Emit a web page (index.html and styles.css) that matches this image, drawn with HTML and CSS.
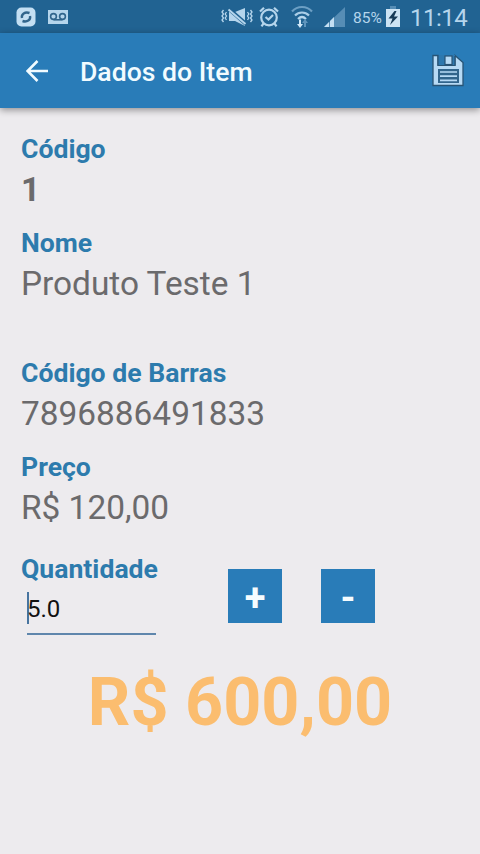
FILE: index.html
```
<!DOCTYPE html>
<html lang="pt-BR">
<head>
    <meta charset="UTF-8">
    <meta name="viewport" content="width=device-width, initial-scale=1.0">
    <title>Dados do Item</title>
    <link rel="stylesheet" href="styles.css">
</head>
<body>
    <div class="status-bar">
        <div class="status-left">
            <svg width="20" height="20" viewBox="0 0 20 20">
                <rect x="0.5" y="0.5" width="19" height="19" rx="5" fill="#c3dff3"/>
                <path d="M6 11C5 7 9 4.500 13.500 6M14 9C15 13 11 15.500 6.500 14" fill="none" stroke="#31658c" stroke-width="2.400"/>
            </svg>
            <svg width="20" height="14" viewBox="0 0 20 14">
                <rect width="20" height="14" fill="#b5d5ec"/>
                <g fill="none" stroke="#31658c" stroke-width="1.600">
                    <circle cx="5.500" cy="6.500" r="2.900"/>
                    <circle cx="14.500" cy="6.500" r="2.900"/>
                    <path d="M5.500 9.800h9"/>
                </g>
            </svg>
        </div>
        <div class="status-right">
            <svg class="icon-mute" width="32" height="20" viewBox="0 0 32 20">
                <g fill="none" stroke="#b5d5ec" stroke-width="1.300">
                    <path d="M2.500 3l-1.500 2 1.500 2-1.500 2 1.500 2-1.500 2 1.500 2M5.500 5l-1.300 2 1.300 2-1.300 2 1.300 2M26.500 5l1.300 2-1.300 2 1.300 2-1.300 2M29.500 3l1.500 2-1.500 2 1.500 2-1.500 2 1.500 2-1.500 2"/>
                </g>
                <path d="M8 5h6l10-4v18l-10-5H8z" fill="#b5d5ec"/>
                <path d="M8 2l17 15" stroke="#216392" stroke-width="4"/>
                <path d="M7.500 2.500l17 14.500" stroke="#b5d5ec" stroke-width="2"/>
            </svg>
            <svg class="icon-alarm" width="20" height="22" viewBox="0 0 20 22">
                <g fill="none" stroke="#b5d5ec" stroke-width="2.200">
                    <circle cx="10" cy="11.500" r="7.800"/>
                    <path d="M1 5.500l4-3.800M19 5.500l-4-3.800M4.500 17.500l-2 2.800M15.500 17.500l2 2.800M6.500 11l3 2.500 4.500-4.500"/>
                </g>
            </svg>
            <svg class="icon-wifi" width="22" height="24" viewBox="0 0 22 24">
                <g fill="none" stroke-width="2.200">
                    <path d="M1 6.500C6.500.5 15.500.5 21 6.500" stroke="#6c9fc4"/>
                    <path d="M4 10.500c4-4 10-4 14 0" stroke="#a9cde7"/>
                    <path d="M7 14c2.500-2.500 5.500-2.500 8 0" stroke="#b5d5ec"/>
                </g>
                <path d="M8 14.500h2v4.500h2l-3 4-3-4h2z" fill="#d0e8f8"/>
                <path d="M14 14l-3 4h2v4h2v-4h2z" fill="#5f95bd"/>
            </svg>
            <svg class="icon-signal" width="21" height="20" viewBox="0 0 21 20">
                <path d="M0 20L21 0v20z" fill="#568db5"/>
                <path d="M0 20l5-5v5zM6 14l4-4v10H6z" fill="#c3dff3"/>
            </svg>
            <span class="battery-text">85%</span>
            <svg class="icon-battery" width="14" height="21" viewBox="0 0 14 21">
                <path d="M4 0h6v3H4z" fill="#568db5"/>
                <path d="M0 3h14v18H0z" fill="#cce3f3"/>
                <path d="M8.500 5L2.500 12.500h4l-2.500 6.500 8-8.500H8L10.500 5z" fill="#173b57"/>
            </svg>
            <span class="clock">11:14</span>
        </div>
    </div>
    <header class="toolbar">
        <svg width="22" height="22" viewBox="0 0 22 22">
            <path d="M22 11H2M11.500 1L1.500 11l10 10" fill="none" stroke="#f1fbff" stroke-width="2.600"/>
        </svg>
        <h1>Dados do Item</h1>
        <svg class="icon-save" width="32" height="33" viewBox="0 0 32 33">
            <path d="M1 1.500h5V11h17V1.500L31 8.500v23H1z" fill="#b6daf5" stroke="#285475" stroke-width="1.300"/>
            <rect x="6" y="1" width="17" height="10" fill="#2d78ae"/>
            <path d="M6 1v10.500h17V2" fill="none" stroke="#285475" stroke-width="1.200"/>
            <rect x="13" y="2" width="7" height="8.500" fill="#b6daf5" stroke="#285475" stroke-width="1.200"/>
            <rect x="6" y="15" width="21" height="14" fill="#31658c"/>
            <path d="M8 18h17M8 22.200h17M8 26.300h17" stroke="#b6daf5" stroke-width="1.700"/>
        </svg>
    </header>
    <main class="container">
        <div class="field">
            <label>Código</label>
            <p class="value bold">1</p>
        </div>
        <div class="field field-name">
            <label>Nome</label>
            <p class="value">Produto Teste 1</p>
        </div>
        <div class="field">
            <label>Código de Barras</label>
            <p class="value">7896886491833</p>
        </div>
        <div class="field">
            <label>Preço</label>
            <p class="value">R$ 120,00</p>
        </div>
        <div class="quantity-row">
            <div class="quantity">
                <label>Quantidade</label>
                <div class="quantity-input"><span class="cursor"></span>5.0</div>
            </div>
            <button type="button">+</button>
            <button type="button">-</button>
        </div>
        <p class="total">R$ 600,00</p>
    </main>
</body>
</html>
```
FILE: styles.css
```
body {
    font-family: Roboto, 'Liberation Sans', sans-serif;
    margin: 0;
    height: 854px;
    overflow: hidden;
    background-color: #edebee;
    color: #6b6a6c;
}
svg {
    display: block;
    flex-shrink: 0;
}
.status-bar {
    display: flex;
    justify-content: space-between;
    box-sizing: border-box;
    height: 33px;
    padding: 0 13px 0 16px;
    background-color: #216392;
    color: #b5d5ec;
}
.status-left, .status-right {
    display: flex;
    align-items: center;
}
.status-left {
    gap: 12px;
}
.icon-mute {
    margin-right: 6px;
}
.icon-alarm {
    margin-right: 12px;
}
.icon-wifi {
    margin-right: 11px;
}
.icon-signal {
    margin-right: 8px;
}
.battery-text {
    width: 29px;
    margin: 2px 4px 0 0;
    font-size: 15.5px;
    white-space: nowrap;
}
.icon-battery {
    margin-right: 10px;
}
.clock {
    width: 57px;
    font-size: 24px;
    line-height: 33px;
    margin-top: 4px;
    letter-spacing: -0.5px;
    white-space: nowrap;
}
.toolbar {
    display: flex;
    align-items: center;
    height: 75px;
    padding: 0 16px 0 26px;
    background-color: #297cb8;
    box-shadow: 0 2px 7px rgba(0, 0, 0, 0.4);
}
.toolbar h1 {
    flex: 1;
    margin: 2px 0 0 32px;
    font-size: 26.6px;
    font-weight: 500;
    color: #f1fbff;
}
.container {
    padding: 23px 21px 0;
}
.field {
    margin-bottom: 12px;
}
.field-name {
    margin-bottom: 48px;
}
label {
    display: block;
    font-size: 26.6px;
    line-height: 36px;
    font-weight: bold;
    color: #2d7bad;
}
.value {
    margin: 0;
    font-size: 33.4px;
    line-height: 46px;
}
.bold {
    font-weight: bold;
}
.quantity-row {
    display: flex;
    margin-top: 20px;
}
.quantity {
    width: 207px;
}
.quantity-input {
    display: flex;
    align-items: center;
    box-sizing: border-box;
    width: 129px;
    height: 48px;
    margin-left: 6px;
    padding-bottom: 3px;
    border-bottom: 2px solid #5f86ac;
    font-size: 24px;
    color: #111;
}
.cursor {
    width: 2px;
    height: 32px;
    margin: -2px -2px 0 0;
    background-color: #47749f;
}
button {
    width: 54px;
    height: 54px;
    margin: 18px 39px 0 0;
    padding: 4px 0 0;
    border: none;
    background-color: #297cb8;
    color: #f5fcff;
    font-family: inherit;
    font-size: 38px;
    font-weight: bold;
    line-height: 50px;
}
.total {
    margin: 27px 0 0;
    font-size: 66.5px;
    line-height: 80px;
    font-weight: bold;
    text-align: center;
    color: #fbbd6f;
}
```
